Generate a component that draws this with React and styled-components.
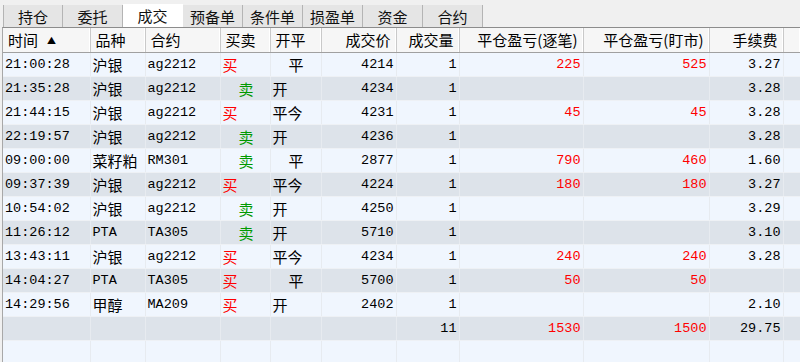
import React from 'react';
import styled, { createGlobalStyle } from 'styled-components';

const CJK = '"Noto Sans CJK SC", "Noto Sans", sans-serif';
const MONO = '"Liberation Mono", "Noto Sans CJK SC", monospace';

const GlobalStyle = createGlobalStyle`
  html, body {
    margin: 0;
    padding: 0;
    background: #f0f0f0;
  }
`;

const Frame = styled.div`
  width: 800px;
  height: 362px;
  display: flex;
  flex-direction: column;
  overflow: hidden;
  background: #f0f0f0;
`;

const TabBar = styled.div`
  height: 27px;
  box-sizing: border-box;
  padding: 5px 0 0 3px;
  display: flex;
  align-items: flex-end;
`;

const Tab = styled.div`
  width: 60px;
  height: ${(p) => (p.$active ? 23 : 22)}px;
  box-sizing: border-box;
  background: ${(p) => (p.$active ? '#ffffff' : '#e5e5e5')};
  border-right: 1px solid ${(p) => (p.$active ? '#ffffff' : '#b4b4b4')};
  border-left: ${(p) => (p.$first ? '1px solid #b4b4b4' : 'none')};
  display: flex;
  align-items: center;
  justify-content: center;
  font-family: ${CJK};
  font-size: 15px;
  color: #111;
`;

const GridBox = styled.div`
  flex: 1;
  margin-left: 2px;
  border-top: 1px solid #8c8c8c;
  border-left: 1px solid #a8a8a8;
  background: #f0f6fe;
  overflow: hidden;
`;

const Table = styled.table`
  border-collapse: collapse;
  table-layout: fixed;
  width: 797px;
`;

const HeadCell = styled.th`
  height: 24px;
  box-sizing: border-box;
  padding: 0 ${(p) => (p.$right ? 5 : 4)}px 0 ${(p) => (p.$right ? 4 : 5)}px;
  background: #f6f6f6;
  border-right: 1px solid #c9c9c9;
  box-shadow: inset -1px 0 0 #ffffff;
  border-bottom: 1px solid #a0a0a0;
  font-family: ${CJK};
  font-size: 15px;
  font-weight: normal;
  color: #000;
  text-align: ${(p) => (p.$right ? 'right' : 'left')};
  white-space: nowrap;
  overflow: hidden;
`;

const SortMark = styled.span`
  font-size: 9px;
  margin-left: 9px;
  vertical-align: 2px;
`;

const Row = styled.tr`
  height: 24px;
  background: ${(p) => (p.$alt ? '#dde3ea' : '#f0f6fe')};
`;

const Cell = styled.td`
  height: 24px;
  box-sizing: border-box;
  padding: 0 2px 0 ${(p) => 2 + (p.$indent || 0)}px;
  border-right: 1px solid #e7ebf0;
  border-bottom: 1px solid #eef1f5;
  font-family: ${(p) => (p.$cjk ? CJK : MONO)};
  font-size: ${(p) => (p.$cjk ? 15 : 13.5)}px;
  color: ${(p) => p.$color || '#000'};
  text-align: ${(p) => (p.$right ? 'right' : 'left')};
  white-space: nowrap;
  overflow: hidden;
`;

const RED = '#ff0000';
const GREEN = '#009900';

const tabs = ['持仓', '委托', '成交', '预备单', '条件单', '损盈单', '资金', '合约'];

const widths = [87, 55, 75, 50, 51, 75, 63, 124, 126, 74, 17];

const columns = [
  { title: '时间', sort: true },
  { title: '品种' },
  { title: '合约' },
  { title: '买卖' },
  { title: '开平' },
  { title: '成交价', right: true },
  { title: '成交量', right: true },
  { title: '平仓盈亏(逐笔)', right: true },
  { title: '平仓盈亏(盯市)', right: true },
  { title: '手续费', right: true },
  { title: '' },
];

const trades = [
  ['21:00:28', '沪银', 'ag2212', '买', '平', '4214', '1', '225', '525', '3.27'],
  ['21:35:28', '沪银', 'ag2212', '卖', '开', '4234', '1', '', '', '3.28'],
  ['21:44:15', '沪银', 'ag2212', '买', '平今', '4231', '1', '45', '45', '3.28'],
  ['22:19:57', '沪银', 'ag2212', '卖', '开', '4236', '1', '', '', '3.28'],
  ['09:00:00', '菜籽粕', 'RM301', '卖', '平', '2877', '1', '790', '460', '1.60'],
  ['09:37:39', '沪银', 'ag2212', '买', '平今', '4224', '1', '180', '180', '3.27'],
  ['10:54:02', '沪银', 'ag2212', '卖', '开', '4250', '1', '', '', '3.29'],
  ['11:26:12', 'PTA', 'TA305', '卖', '开', '5710', '1', '', '', '3.10'],
  ['13:43:11', '沪银', 'ag2212', '买', '平今', '4234', '1', '240', '240', '3.28'],
  ['14:04:27', 'PTA', 'TA305', '买', '平', '5700', '1', '50', '50', ''],
  ['14:29:56', '甲醇', 'MA209', '买', '开', '2402', '1', '', '', '2.10'],
];

const isCjk = (s) => /[\u4e00-\u9fff]/.test(s);

function TradeRow({ trade, alt }) {
  const [time, product, contract, side, offset, price, qty, pnl, pnlMkt, fee] = trade;
  return (
    <Row $alt={alt}>
      <Cell>{time}</Cell>
      <Cell $cjk={isCjk(product)}>{product}</Cell>
      <Cell>{contract}</Cell>
      <Cell $cjk $color={side === '买' ? RED : GREEN} $indent={side === '卖' ? 16 : 0}>
        {side}
      </Cell>
      <Cell $cjk $indent={offset === '平' ? 16 : 0}>{offset}</Cell>
      <Cell $right>{price}</Cell>
      <Cell $right>{qty}</Cell>
      <Cell $right $color={RED}>{pnl}</Cell>
      <Cell $right $color={RED}>{pnlMkt}</Cell>
      <Cell $right>{fee}</Cell>
      <Cell />
    </Row>
  );
}

export default function App() {
  return (
    <Frame>
      <GlobalStyle />
      <TabBar>
        {tabs.map((t, i) => (
          <Tab key={t} $active={t === '成交'} $first={i === 0}>
            {t}
          </Tab>
        ))}
      </TabBar>
      <GridBox>
        <Table>
          <colgroup>
            {widths.map((w, i) => (
              <col key={i} style={{ width: w }} />
            ))}
          </colgroup>
          <thead>
            <tr>
              {columns.map((c, i) => (
                <HeadCell key={i} $right={c.right}>
                  {c.title}
                  {c.sort && <SortMark>▲</SortMark>}
                </HeadCell>
              ))}
            </tr>
          </thead>
          <tbody>
            {trades.map((t, i) => (
              <TradeRow key={i} trade={t} alt={i % 2 === 1} />
            ))}
            <Row $alt>
              <Cell />
              <Cell />
              <Cell />
              <Cell />
              <Cell />
              <Cell />
              <Cell $right>11</Cell>
              <Cell $right $color={RED}>1530</Cell>
              <Cell $right $color={RED}>1500</Cell>
              <Cell $right>29.75</Cell>
              <Cell />
            </Row>
            <Row>
              {widths.map((w, i) => (
                <Cell key={i} />
              ))}
            </Row>
          </tbody>
        </Table>
      </GridBox>
    </Frame>
  );
}
